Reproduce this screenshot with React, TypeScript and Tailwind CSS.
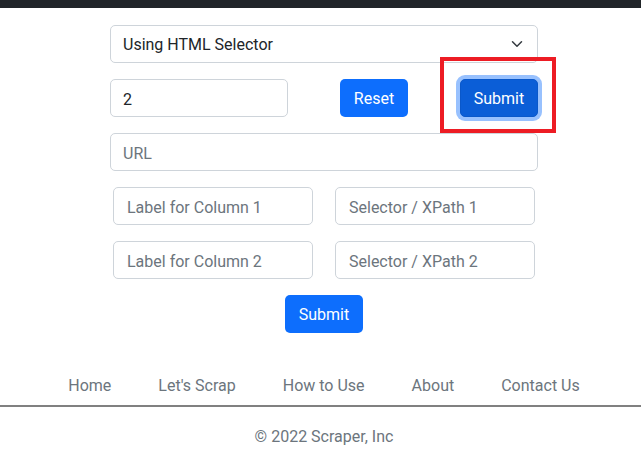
import React from 'react';

const fieldClass =
  'h-[38px] rounded-[5px] border border-[#ced4da] bg-white px-3 pt-[2px] text-[16px] text-[#212529] placeholder-[#6c757d] outline-none';

const navLinks = ['Home', "Let's Scrap", 'How to Use', 'About', 'Contact Us'];

export default function App() {
  return (
    <div className="min-h-[459px] bg-white font-['Roboto',sans-serif] text-[16px] leading-6 text-[#212529]">
      <div className="h-2 bg-[#212529]" />

      <div className="ml-[110px] w-[428px] pt-[17px]">
        {/* scrap mode */}
        <div className="relative flex h-[38px] items-center rounded-[5px] border border-[#ced4da] bg-white pl-3 pr-3">
          <span className="flex-1 pt-[2px]">Using HTML Selector</span>
          <svg width="16" height="12" viewBox="0 0 16 16" fill="none" stroke="#343a40" strokeWidth="2" strokeLinecap="round" strokeLinejoin="round">
            <path d="m2 5 6 6 6-6" />
          </svg>
        </div>

        <div className="relative mt-4 flex items-center justify-between">
          <input className={`${fieldClass} w-[178px]`} defaultValue="2" />
          <button className="h-[38px] w-[68px] rounded-[5px] bg-[#0d6efd] pt-[2px] text-white">Reset</button>
          <button className="h-[38px] w-[78px] rounded-[5px] border border-[#0a58ca] bg-[#0b5ed7] pt-[2px] text-white shadow-[0_0_0_4px_#98c1fe]">
            Submit
          </button>
          {/* annotation box */}
          <div className="pointer-events-none absolute left-[330px] top-[-22px] h-[76px] w-[116px] border-4 border-[#ed1c24]" />
        </div>

        <input className={`${fieldClass} mt-4 w-full`} placeholder="URL" />

        <div className="mt-4 flex gap-[22px] px-[3px]">
          <input className={`${fieldClass} w-[200px] pl-[13px]`} placeholder="Label for Column 1" />
          <input className={`${fieldClass} w-[200px] pl-[13px]`} placeholder="Selector / XPath 1" />
        </div>
        <div className="mt-4 flex gap-[22px] px-[3px]">
          <input className={`${fieldClass} w-[200px] pl-[13px]`} placeholder="Label for Column 2" />
          <input className={`${fieldClass} w-[200px] pl-[13px]`} placeholder="Selector / XPath 2" />
        </div>

        <div className="mt-4 flex justify-center">
          <button className="h-[38px] w-[78px] rounded-[5px] bg-[#0d6efd] pt-[2px] text-white">Submit</button>
        </div>
      </div>

      <footer className="mt-[41px]">
        <div className="ml-[110px] flex w-[428px] justify-center gap-[47px] whitespace-nowrap text-[#6c757d]">
          {navLinks.map((l) => (
            <a key={l} className="shrink-0">
              {l}
            </a>
          ))}
        </div>
        <div className="mt-[7px] h-[2px] bg-[#808080]" />
        <p className="ml-[110px] mt-[18px] w-[428px] text-center text-[#6c757d]">© 2022 Scraper, Inc</p>
      </footer>
    </div>
  );
}
